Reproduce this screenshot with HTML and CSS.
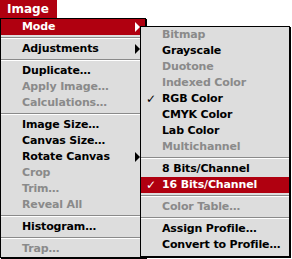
FILE: index.html
```html
<!DOCTYPE html>
<html>
<head>
<meta charset="utf-8">
<link rel="stylesheet" href="styles.css">
</head>
<body>
<div class="stage">
  <div class="title">Image</div>
  <div class="menu main">
    <div class="item hl">Mode<span class="arrow"></span></div>
    <div class="sep"></div>
    <div class="item">Adjustments<span class="arrow"></span></div>
    <div class="sep"></div>
    <div class="item">Duplicate…</div>
    <div class="item dis">Apply Image…</div>
    <div class="item dis">Calculations…</div>
    <div class="sep"></div>
    <div class="item">Image Size…</div>
    <div class="item">Canvas Size…</div>
    <div class="item">Rotate Canvas<span class="arrow"></span></div>
    <div class="item dis">Crop</div>
    <div class="item dis">Trim…</div>
    <div class="item dis">Reveal All</div>
    <div class="sep"></div>
    <div class="item">Histogram…</div>
    <div class="sep"></div>
    <div class="item dis">Trap…</div>
  </div>
  <div class="menu sub">
    <div class="item dis">Bitmap</div>
    <div class="item">Grayscale</div>
    <div class="item dis">Duotone</div>
    <div class="item dis">Indexed Color</div>
    <div class="item"><span class="check">✓</span>RGB Color</div>
    <div class="item">CMYK Color</div>
    <div class="item">Lab Color</div>
    <div class="item dis">Multichannel</div>
    <div class="sep"></div>
    <div class="item">8 Bits/Channel</div>
    <div class="item hl"><span class="check">✓</span>16 Bits/Channel</div>
    <div class="sep"></div>
    <div class="item dis">Color Table…</div>
    <div class="sep"></div>
    <div class="item">Assign Profile…</div>
    <div class="item">Convert to Profile…</div>
  </div>
</div>
</body>
</html>
```
FILE: styles.css
```css
html, body {
  margin: 0;
  padding: 0;
  background: #ffffff;
}
.stage {
  position: relative;
  width: 292px;
  height: 259px;
  font-family: "DejaVu Sans", "Liberation Sans", sans-serif;
  font-weight: bold;
  font-size: 11px;
  letter-spacing: -0.15px;
}
.title {
  display: inline-block;
  background: #b00010;
  color: #ffffff;
  height: 18px;
  line-height: 18px;
  padding: 0 8px 0 7px;
  font-size: 12px;
  letter-spacing: 0;
  vertical-align: top;
}
.menu {
  background: #dddddd;
  border: 1px solid #000000;
  box-shadow: 1px 1px 0 #000000;
  box-sizing: border-box;
}
.main {
  width: 146px;
}
.sub {
  position: absolute;
  left: 140px;
  top: 26px;
  width: 150px;
  padding-bottom: 3px;
}
.item {
  position: relative;
  height: 16px;
  line-height: 16px;
  padding-left: 21px;
  color: #000000;
  white-space: nowrap;
}
.item.dis {
  color: #8a8a8a;
}
.item.hl {
  background: #b00010;
  color: #ffffff;
}
.sep {
  height: 6px;
  position: relative;
}
.sep::before {
  content: "";
  position: absolute;
  left: 0;
  right: 0;
  top: 2px;
  height: 1px;
  background: #8a8a8a;
  border-bottom: 1px solid #ffffff;
}
.arrow {
  position: absolute;
  right: 5px;
  top: 3px;
  width: 0;
  height: 0;
  border-top: 5px solid transparent;
  border-bottom: 5px solid transparent;
  border-left: 5px solid #000000;
}
.hl .arrow {
  border-left-color: #ffffff;
}
.check {
  position: absolute;
  left: 5px;
  top: 0;
  font-weight: normal;
  font-size: 12px;
}
```
